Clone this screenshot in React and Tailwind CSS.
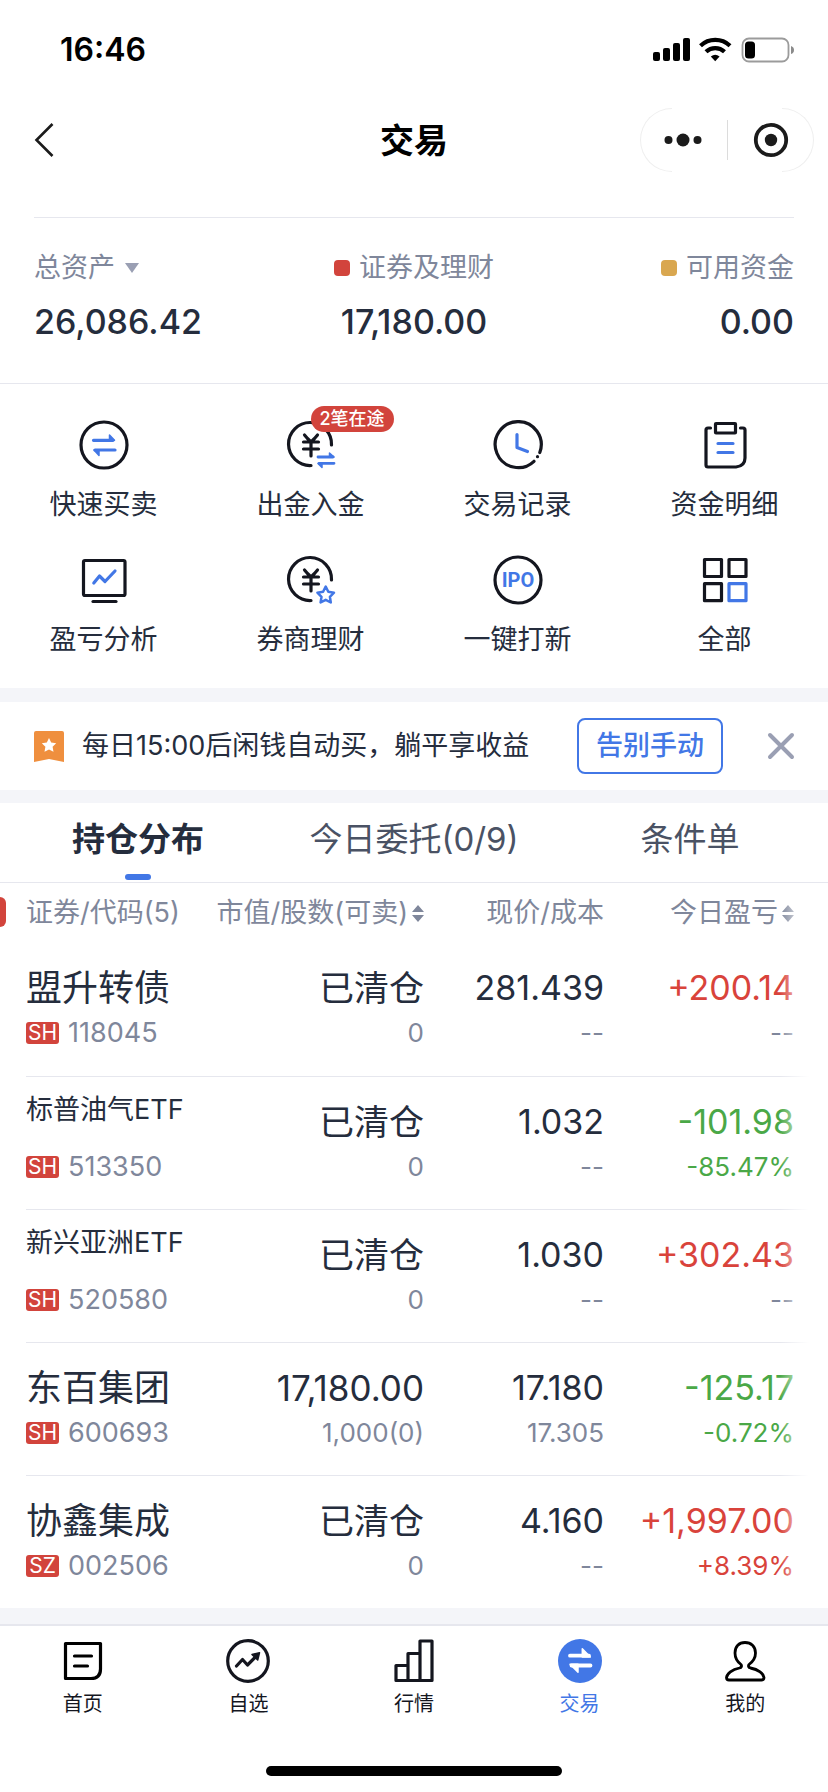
import { useState } from "react";
import clsx from "clsx";

const INK = "#14161f";
const BLUE = "#4277e6";

const HOLDINGS = [
  { name: "盟升转债", market: "SH", code: "118045", value: "已清仓", shares: "0", price: "281.439", cost: "--", pnl: "+200.14", pct: "--" },
  { name: "标普油气ETF", market: "SH", code: "513350", value: "已清仓", shares: "0", price: "1.032", cost: "--", pnl: "-101.98", pct: "-85.47%" },
  { name: "新兴亚洲ETF", market: "SH", code: "520580", value: "已清仓", shares: "0", price: "1.030", cost: "--", pnl: "+302.43", pct: "--" },
  { name: "东百集团", market: "SH", code: "600693", value: "17,180.00", shares: "1,000(0)", price: "17.180", cost: "17.305", pnl: "-125.17", pct: "-0.72%" },
  { name: "协鑫集成", market: "SZ", code: "002506", value: "已清仓", shares: "0", price: "4.160", cost: "--", pnl: "+1,997.00", pct: "+8.39%" },
];

const TABS = ["持仓分布", "今日委托(0/9)", "条件单"];

// 50x50 line icons for the shortcut grid
function GridIcon({ children }) {
  return (
    <svg
      viewBox="0 0 50 50"
      className="h-[50px] w-[50px]"
      fill="none"
      stroke={INK}
      strokeWidth="3.2"
      strokeLinecap="round"
      strokeLinejoin="round"
      aria-hidden="true"
    >
      {children}
    </svg>
  );
}

function YuanCircle() {
  return (
    <>
      <path d="M45.5 25A21.5 21.5 0 1 0 25 45.5" />
      <path d="M18.5 15l3 3.5M31.5 15l-3 3.5M21.5 18.5L25 22l3.5-3.5M17.5 22h15M17.5 29h15M25 22v14" />
    </>
  );
}

const SHORTCUTS = [
  {
    label: "快速买卖",
    icon: (
      <GridIcon>
        <circle cx="25" cy="25" r="23" />
        <g stroke={BLUE}>
          <path d="M14.5 20.3H34M16 30h20" />
          <path d="M30.5 15l5 5.3h-5zM20 35.5l-5-5.5h5z" fill={BLUE} strokeWidth="1.5" />
        </g>
      </GridIcon>
    ),
  },
  {
    label: "出金入金",
    badge: "2笔在途",
    icon: (
      <GridIcon>
        <YuanCircle />
        <g stroke={BLUE}>
          <path d="M32 37h15M33 43.3h15" strokeWidth="2.800" />
          <path d="M43.5 33l4.5 4h-4.5zM36 47.5l-4-4h4z" fill={BLUE} strokeWidth="1.5" />
        </g>
      </GridIcon>
    ),
  },
  {
    label: "交易记录",
    icon: (
      <GridIcon>
        <path d="M46.8 32.5A23 23 0 1 0 41 41.3" />
        <circle cx="44.5" cy="36.7" r="1.6" fill={INK} stroke="none" />
        <path d="M24 14.5v13l10.5 4" stroke={BLUE} />
      </GridIcon>
    ),
  },
  {
    label: "资金明细",
    icon: (
      <GridIcon>
        <path d="M10.5 8H8q-2 0-2 2v35q0 2 2 2h28q9-1 9-9V10q0-2-2-2h-2.5" />
        <rect x="15.5" y="3.5" width="20" height="9.5" rx="0.5" />
        <path d="M18 23.5h15M18 32.5h15" stroke={BLUE} />
      </GridIcon>
    ),
  },
  {
    label: "盈亏分析",
    icon: (
      <GridIcon>
        <rect x="4.5" y="5.5" width="41.5" height="35" rx="1.5" />
        <path d="M14 46.5h23" />
        <path d="M14.8 28l5.7-7 5.5 5.5 10-10.5" stroke={BLUE} />
      </GridIcon>
    ),
  },
  {
    label: "券商理财",
    icon: (
      <GridIcon>
        <YuanCircle />
        <path
          d="M39.7 31.5l2.6 5.3 5.7.9-4.1 4.1.9 5.7-5.1-2.7-5.1 2.7.9-5.7-4.1-4.1 5.7-.9z"
          stroke={BLUE}
          strokeWidth="2.5"
        />
      </GridIcon>
    ),
  },
  {
    label: "一键打新",
    icon: (
      <GridIcon>
        <circle cx="25" cy="25" r="23" />
        <text
          x="25"
          y="32"
          textAnchor="middle"
          className="font-['Roboto',sans-serif] text-[20px] font-bold"
          fill={BLUE}
          stroke="none"
        >
          IPO
        </text>
      </GridIcon>
    ),
  },
  {
    label: "全部",
    icon: (
      <GridIcon>
        <rect x="4.5" y="4.5" width="17" height="17" />
        <rect x="29" y="4.5" width="17" height="17" />
        <rect x="4.5" y="28.7" width="17" height="17" />
        <rect x="29" y="28.7" width="17" height="17" stroke={BLUE} />
      </GridIcon>
    ),
  },
];

function NavIcon({ children }) {
  return (
    <svg
      viewBox="0 0 46 46"
      className="h-[46px] w-[46px]"
      fill="none"
      stroke={INK}
      strokeWidth="3.2"
      strokeLinecap="round"
      strokeLinejoin="round"
      aria-hidden="true"
    >
      {children}
    </svg>
  );
}

const NAV = [
  {
    label: "首页",
    icon: (
      <NavIcon>
        <path d="M5.5 5.5h35V31q0 9.5-9.5 9.5H5.5z" stroke="#000" />
        <path d="M14.5 18h17M14.5 28h13" stroke="#000" />
      </NavIcon>
    ),
  },
  {
    label: "自选",
    icon: (
      <NavIcon>
        <circle cx="23" cy="23" r="20.3" />
        <path d="M11.5 28l6-6.5 5 5.5 9-9" />
        <path d="M34.5 14.8l-7.5 1.7 5.7 5.5z" fill={INK} strokeWidth="1.5" />
      </NavIcon>
    ),
  },
  {
    label: "行情",
    icon: (
      <NavIcon>
        <path d="M5 27.5h12v15H5zM17 15.5h12v27H17zM29 3h12v39.5H29z" />
      </NavIcon>
    ),
  },
  {
    label: "交易",
    active: true,
    icon: (
      <NavIcon>
        <circle cx="23" cy="23" r="22" fill={BLUE} stroke="none" />
        <g stroke="#fff">
          <path d="M13 17.7h19M14.5 27.5h19" strokeWidth="3.8" />
          <path d="M25.3 10.8l8 8.2h-8zM21 34.3l-8-8h8z" fill="#fff" strokeWidth="1.5" />
        </g>
      </NavIcon>
    ),
  },
  {
    label: "我的",
    icon: (
      <NavIcon>
        <path
          d="M19 26.5C15 23.5 13 20 13 15 13 8.500 17 4.500 23 4.500S33.500 8.500 33.500 15c0 5-2.500 8.500-6.500 11.500-1 1.500-.5 3 1.500 3.500 8 1.500 13 5.500 13.500 9.500q0 2.500-2.500 2.500H7q-2.500 0-2.500-2.500C5 35.500 10 31.500 17.500 30c2-.5 2.500-2 1.500-3.500z"
          stroke="#000"
          strokeWidth="2.8"
        />
      </NavIcon>
    ),
  },
];

function StatusBar() {
  return (
    <div className="flex h-[100px] items-center justify-between pr-[33px] pl-[60px] text-black">
      <span className="text-[32px] font-semibold">16:46</span>
      <svg viewBox="0 0 142 26" className="h-[26px] w-[142px]" aria-hidden="true">
        <rect x="0" y="15" width="7" height="9" rx="2" />
        <rect x="10" y="11" width="7" height="13" rx="2" />
        <rect x="20" y="6" width="7" height="18" rx="2" />
        <rect x="30" y="1" width="7" height="23" rx="2" />
        <g fill="none" stroke="#000" strokeWidth="4.2">
          <path d="M47.5 8.7a21.5 21.5 0 0 1 29.5 0" />
          <path d="M53 14.8a13.5 13.5 0 0 1 18.5 0" />
        </g>
        <path d="M62.2 24.3l-4.4-4.7q4.4-3.6 8.8 0z" />
        <rect x="89.5" y="1.5" width="46" height="23" rx="6.5" fill="none" stroke="#9b9b9b" strokeWidth="1.8" />
        <rect x="92" y="4.5" width="10" height="17" rx="3.5" />
        <path d="M138 9q3 1 3 4t-3 4z" fill="#8b8b8b" />
      </svg>
    </div>
  );
}

function Header() {
  return (
    <header className="grid h-20 grid-cols-[1fr_auto_1fr] items-center px-[14px]">
      <button aria-label="返回" className="justify-self-start pl-[19px]">
        <svg viewBox="0 0 22 36" className="h-9 w-[22px]" fill="none" stroke="#1b1b1b" strokeWidth="2.6" aria-hidden="true">
          <path d="M19.5 2L3.5 18l16 16" />
        </svg>
      </button>
      <h1 className="text-[34px] font-bold text-black">交易</h1>
      <div className="relative flex h-16 w-[174px] items-center justify-self-end">
        <span className="absolute inset-y-0 left-0 w-8 rounded-l-full border border-r-0 border-[#efefef]" />
        <span className="absolute inset-y-0 right-0 w-8 rounded-r-full border border-l-0 border-[#efefef]" />
        <button aria-label="更多" className="flex h-10 flex-1 items-center justify-center border-r border-[#dcdcdc]">
          <svg viewBox="0 0 38 14" className="h-[14px] w-[38px]" fill="#1b1b1b" aria-hidden="true">
            <circle cx="4.5" cy="7" r="4" />
            <circle cx="19" cy="7" r="6.5" />
            <circle cx="33.5" cy="7" r="4" />
          </svg>
        </button>
        <button aria-label="关闭小程序" className="flex h-10 flex-1 items-center justify-center">
          <svg viewBox="0 0 36 36" className="h-9 w-9" aria-hidden="true">
            <circle cx="18" cy="18" r="15.2" fill="none" stroke="#1b1b1b" strokeWidth="3.8" />
            <circle cx="18" cy="18" r="6.2" fill="#1b1b1b" />
          </svg>
        </button>
      </div>
    </header>
  );
}

function Amount({ children }) {
  return <div className="mt-3 text-[34px] leading-[44px] font-medium text-[#252d3d]">{children}</div>;
}

function Summary() {
  return (
    <section className="border-b border-[#e6e7ee] px-[34px] pt-[37px]">
      <div className="grid h-[166px] grid-cols-3 border-t border-[#e6e7ee] pt-[30px] text-[27px] leading-10 text-[#7f879b]">
        <div>
          <button className="flex items-center gap-[10px]">
            总资产
            <svg viewBox="0 0 14 10" className="h-[10px] w-[14px]" fill="#9a9fb3" aria-hidden="true">
              <path d="M0 0h14L7 10z" />
            </svg>
          </button>
          <Amount>26,086.42</Amount>
        </div>
        <div className="text-center">
          <div className="flex items-center justify-center gap-[9px]">
            <i className="h-4 w-4 rounded-[4px] bg-[#d2443c]" />
            证券及理财
          </div>
          <Amount>17,180.00</Amount>
        </div>
        <div className="text-right">
          <div className="flex items-center justify-end gap-[9px]">
            <i className="h-4 w-4 rounded-[4px] bg-[#d9a750]" />
            可用资金
          </div>
          <Amount>0.00</Amount>
        </div>
      </div>
    </section>
  );
}

function Shortcuts() {
  return (
    <section className="grid grid-cols-4 gap-y-[30px] pt-9 pb-7">
      {SHORTCUTS.map(({ label, icon, badge }) => (
        <button key={label} className="flex flex-col items-center gap-[15px] text-[27px] leading-10 text-[#252d3d]">
          <span className="relative">
            {icon}
            {badge && (
              <span className="absolute -top-[14px] left-1/2 rounded-full bg-[#d2443c] px-[9px] text-[18px] leading-[26px] font-medium whitespace-nowrap text-white">
                {badge}
              </span>
            )}
          </span>
          {label}
        </button>
      ))}
    </section>
  );
}

function Banner({ onClose }) {
  return (
    <section className="flex h-[88px] items-center pr-8 pl-[34px]">
      <svg viewBox="0 0 30 31" className="h-[31px] w-[30px]" aria-hidden="true">
        <path d="M2 0h26q2 0 2 2v29l-15-3-15 3V2q0-2 2-2z" fill="#ef8f3e" />
        <path d="M15 7l2.2 4.6 5 .7-3.6 3.5.9 5-4.5-2.4-4.5 2.4.9-5-3.6-3.5 5-.7z" fill="#fff" />
      </svg>
      <p className="ml-[18px] flex-1 text-[27px] text-[#252d3d]">每日15:00后闲钱自动买，躺平享收益</p>
      <button className="h-14 rounded-lg border-2 border-[#4277e6] px-[17px] text-[27px] font-medium text-[#4277e6]">
        告别手动
      </button>
      <button aria-label="关闭" className="ml-[43px]" onClick={onClose}>
        <svg viewBox="0 0 30 30" className="h-[30px] w-[30px]" stroke="#9a9fb3" strokeWidth="4" strokeLinecap="round" aria-hidden="true">
          <path d="M4 4l22 22M26 4L4 26" />
        </svg>
      </button>
    </section>
  );
}

function SortIcon() {
  return (
    <svg viewBox="0 0 12 17" className="h-[17px] w-3" fill="#7f879b" aria-hidden="true">
      <path d="M0 7l6-7 6 7zM0 10h12l-6 7z" />
    </svg>
  );
}

function pnlColor(text) {
  if (text === "--") return "text-[#7f879b]";
  return text.startsWith("+") ? "text-[#d9433b]" : "text-[#4aa847]";
}

function HoldingsTable() {
  return (
    <div className="relative pl-[26px]">
      <span className="absolute top-[14px] left-0 h-[30px] w-[6px] rounded-r-md bg-[#d2443c]" />
      <table className="w-full table-fixed text-right">
        <thead>
          <tr className="h-[60px] text-[27px] text-[#7f879b]">
            <th className="text-left font-normal whitespace-nowrap">证券/代码(5)</th>
            <th className="w-[216px] font-normal whitespace-nowrap">
              <button className="inline-flex items-center gap-1">
                市值/股数(可卖)
                <SortIcon />
              </button>
            </th>
            <th className="w-[180px] font-normal">现价/成本</th>
            <th className="w-[224px] pr-[34px] font-normal">
              <button className="inline-flex items-center gap-1">
                今日盈亏
                <SortIcon />
              </button>
            </th>
          </tr>
        </thead>
        <tbody>
          {HOLDINGS.map((h) => (
            <tr
              key={h.code}
              className="h-[133px] border-b border-[#e6e7ee] align-top text-[34px] leading-[50px] text-[#252d3d] last:border-0"
            >
              <td className="pt-5 text-left">
                <div className={clsx("h-[50px]", h.name.length > 4 ? "text-[27px] leading-[26px]" : "text-[36px]")}>
                  {h.name}
                </div>
                <div className="flex items-center gap-[9px] text-[27px] leading-10 text-[#7f879b]">
                  <span className="w-[33px] rounded-[3px] bg-[#d2443c] text-center text-[21px] leading-[22px] text-white">
                    {h.market}
                  </span>
                  {h.code}
                </div>
              </td>
              <td className="pt-5 text-[35px]">
                {h.value}
                <div className="text-[26px] leading-10 text-[#7f879b]">{h.shares}</div>
              </td>
              <td className="pt-5">
                {h.price}
                <div className="text-[26px] leading-10 text-[#7f879b]">{h.cost}</div>
              </td>
              <td className={clsx("pt-5 pr-[34px]", pnlColor(h.pnl))}>
                {h.pnl}
                <div className={clsx("text-[26px] leading-10", pnlColor(h.pct))}>{h.pct}</div>
              </td>
            </tr>
          ))}
        </tbody>
      </table>
      <div className="pointer-events-none absolute inset-y-0 right-0 w-12 bg-linear-to-r from-white/0 to-white to-60%" />
    </div>
  );
}

export default function App() {
  const [tab, setTab] = useState(0);
  const [showBanner, setShowBanner] = useState(true);

  return (
    <div className="flex min-h-screen flex-col bg-white font-['Inter','Noto_Sans_CJK_SC',sans-serif]">
      <StatusBar />
      <Header />
      <Summary />
      <Shortcuts />
      <div className="h-[14px] bg-[#f4f5f9]" />
      {showBanner && <Banner onClose={() => setShowBanner(false)} />}
      <div className="h-[13px] bg-[#f4f5f9]" />

      <div className="grid h-20 grid-cols-3 border-b border-[#e6e7ee] text-[33px]">
        {TABS.map((label, i) => (
          <button
            key={label}
            onClick={() => setTab(i)}
            className={clsx("relative pb-[6px]", tab === i ? "font-bold text-[#252d3d]" : "text-[#4a5264]")}
          >
            {label}
            {tab === i && (
              <span className="absolute bottom-[2px] left-1/2 h-[6px] w-[26px] -translate-x-1/2 rounded-sm bg-[#4277e6]" />
            )}
          </button>
        ))}
      </div>
      <HoldingsTable />

      <div className="h-4 bg-[#f4f5f9]" />
      <nav className="grid grid-cols-5 border-t-2 border-[#e6e7ee] pt-3">
        {NAV.map(({ label, icon, active }) => (
          <a
            key={label}
            href="#"
            className={clsx(
              "flex flex-col items-center gap-[5px] text-[20px] leading-[30px]",
              active ? "text-[#4277e6]" : "text-[#14161f]"
            )}
          >
            {icon}
            {label}
          </a>
        ))}
      </nav>
      <div className="mx-auto mt-auto mb-4 h-[10px] w-[296px] rounded-full bg-black" />
    </div>
  );
}
